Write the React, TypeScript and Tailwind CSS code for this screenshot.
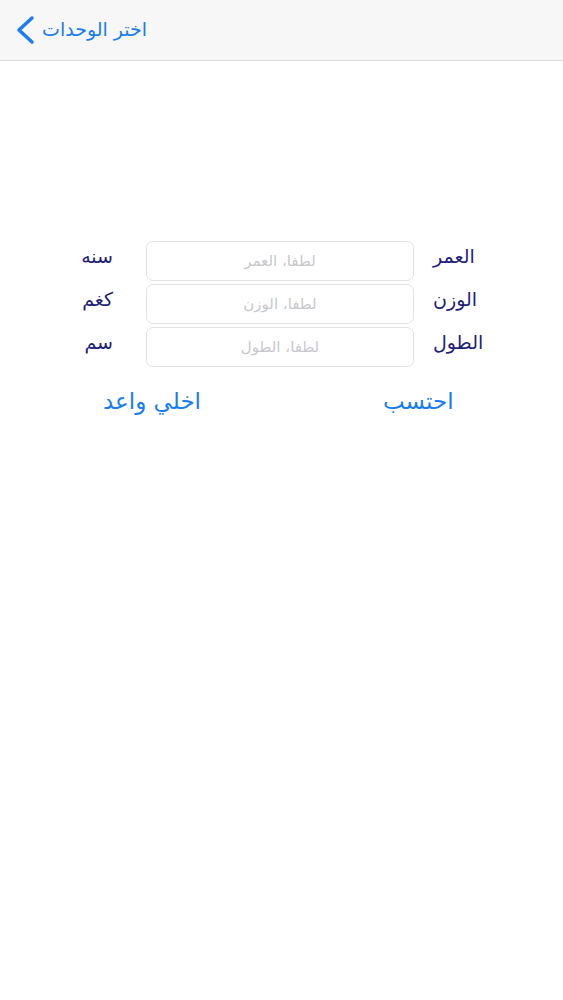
const ROWS = [
  { label: 'العمر', unit: 'سنه', placeholder: 'لطفا، العمر' },
  { label: 'الوزن', unit: 'كغم', placeholder: 'لطفا، الوزن' },
  { label: 'الطول', unit: 'سم', placeholder: 'لطفا، الطول' },
];

export default function App() {
  return (
    <div className="min-h-screen bg-white" style={{ fontFamily: '"DejaVu Sans", sans-serif' }}>
      {/* Nav bar */}
      <div className="h-[61px] bg-[#f7f7f8] border-b border-[#dcdcdf] flex items-center pl-[15px]">
        <button className="flex items-center text-[#1a7df1]">
          <svg width="20" height="30" viewBox="0 0 20 30" fill="none">
            <polyline points="17,3 4,15 17,27" stroke="currentColor" strokeWidth="3.5" strokeLinecap="round" strokeLinejoin="round" />
          </svg>
          <span className="text-[19px] ml-[7px] mb-[2px]">اختر الوحدات</span>
        </button>
      </div>

      {/* Form */}
      <div className="pt-[180px] pl-[60px]">
        <div className="flex flex-col gap-[3px]">
          {ROWS.map((row) => (
            <div key={row.label} className="flex items-center">
              <div className="w-[53px] text-right text-[19px] text-[#1e1e7c] mb-[10px]" dir="rtl">
                {row.unit}
              </div>
              <input
                dir="rtl"
                placeholder={row.placeholder}
                className="ml-[33px] w-[268px] h-[40px] rounded-[7px] border border-[#e3e3e6] text-center text-[15px] placeholder:text-[#c8c8cc] outline-none"
              />
              <div className="ml-[19px] text-[19px] text-[#1e1e7c] mb-[10px]" dir="rtl">
                {row.label}
              </div>
            </div>
          ))}
        </div>

        <div className="flex mt-[17px]">
          <button className="ml-[43px] text-[23px] text-[#1a7df1]" dir="rtl">اخلي واعد</button>
          <button className="ml-[182px] text-[23px] text-[#1a7df1]" dir="rtl">احتسب</button>
        </div>
      </div>
    </div>
  );
}
